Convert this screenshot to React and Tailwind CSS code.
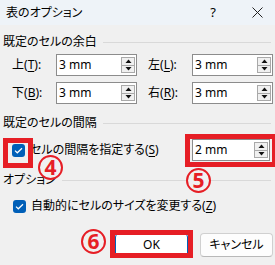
import React from 'react';

const font = "[font-family:'Noto_Sans','Noto_Sans_CJK_JP',sans-serif] [font-feature-settings:'palt']";

function Header({ children }) {
  return (
    <div className="flex items-center h-[16px] pl-[3px] pr-[4px] text-[12px] text-black">
      <span>{children}</span>
      <div className="flex-1 h-px bg-[#d9d9d9] ml-[6px]" />
    </div>
  );
}

function Spin({ value, width }) {
  return (
    <div className={`flex h-[22px] bg-white border border-[#8c8c8c] ${width}`}>
      <div className="flex-1 flex items-center pl-[2px] text-[12px] text-black">{value}</div>
      <div className="flex flex-col w-[15px] py-[2px] pr-[1px]">
        <div className="flex-1 flex items-center justify-center bg-[#f0f0f0] border border-[#a9a9a9]">
          <svg width="7" height="4" viewBox="0 0 7 4"><path d="M0.5 4 L3.5 0.5 L6.5 4 Z" fill="#111" /></svg>
        </div>
        <div className="flex-1 flex items-center justify-center bg-[#f0f0f0] border border-t-0 border-[#a9a9a9]">
          <svg width="7" height="4" viewBox="0 0 7 4"><path d="M0.5 0 L3.5 3.5 L6.5 0 Z" fill="#111" /></svg>
        </div>
      </div>
    </div>
  );
}

function Label({ text, k }) {
  return (
    <div className="w-[44px] text-[12px] text-black">
      {text}(<span className="underline underline-offset-2">{k}</span>):
    </div>
  );
}

function Check() {
  return (
    <div className="w-[13px] h-[13px] rounded-[3px] bg-[#005fb8] flex items-center justify-center shrink-0">
      <svg width="9" height="7" viewBox="0 0 9 7">
        <path d="M1 3.6 L3.3 5.8 L8 1.2" fill="none" stroke="white" strokeWidth="1.2" />
      </svg>
    </div>
  );
}

function Num({ n, className }) {
  return (
    <div className={`absolute w-[25px] h-[25px] rounded-full border-2 border-[#e61e25] bg-[#f0f0f0] flex items-center justify-center text-[#e61e25] text-[21px] font-bold leading-none ${className}`}>
      {n}
    </div>
  );
}

export default function App() {
  return (
    <div className={`relative w-[275px] h-[265px] overflow-hidden bg-[#f0f0f0] ${font}`}>
      <div className="h-[25px] bg-[#eef3f8] flex items-center pl-[6px] text-[12px] text-black">
        <span>表のオプション</span>
        <span className="ml-auto mr-[36px] text-[13px]">?</span>
        <svg width="11" height="11" viewBox="0 0 11 11" className="mr-[12px]">
          <path d="M0.5 0.5 L10.5 10.5 M10.5 0.5 L0.5 10.5" stroke="#222" strokeWidth="1" />
        </svg>
      </div>

      <div className="mt-[9px]"><Header>既定のセルの余白</Header></div>

      <div className="mt-[4px] pl-[12px] flex flex-col gap-[6px]">
        <div className="flex items-center">
          <Label text="上" k="T" />
          <Spin value="3 mm" width="w-[81px]" />
          <div className="w-[11px]" />
          <Label text="左" k="L" />
          <Spin value="3 mm" width="w-[81px]" />
        </div>
        <div className="flex items-center">
          <Label text="下" k="B" />
          <Spin value="3 mm" width="w-[81px]" />
          <div className="w-[11px]" />
          <Label text="右" k="R" />
          <Spin value="3 mm" width="w-[81px]" />
        </div>
      </div>

      <div className="mt-[11px]"><Header>既定のセルの間隔</Header></div>

      <div className="mt-[8px] h-[22px] flex items-center pl-[12px] pr-[5px]">
        <Check />
        <span className="ml-[5px] text-[12px] text-black">
          セルの間隔を指定する(<span className="underline underline-offset-2">S</span>)
        </span>
        <div className="ml-auto">
          <Spin value="2 mm" width="w-[78px]" />
        </div>
      </div>

      <div className="mt-[11px]"><Header>オプション</Header></div>

      <div className="mt-[10px] h-[16px] flex items-center pl-[13px]">
        <Check />
        <span className="ml-[5px] text-[12px] text-black">
          自動的にセルのサイズを変更する(<span className="underline underline-offset-2">Z</span>)
        </span>
      </div>

      <div className="mt-[19px] flex justify-end gap-[12px] pr-[2px]">
        <button className="w-[73px] h-[24px] rounded-[4px] bg-white border border-[#005fb8] text-[12px] text-black">OK</button>
        <button className="w-[73px] h-[24px] rounded-[4px] bg-[#fdfdfd] border border-[#d0d0d0] border-b-[#b8b8b8] text-[12px] text-black">キャンセル</button>
      </div>

      <div className="absolute left-[3px] top-[138px] w-[30px] h-[30px] border-[5px] border-[#e61e25]" />
      <div className="absolute left-[185px] top-[134px] w-[92px] h-[33px] border-[5px] border-[#e61e25]" />
      <div className="absolute left-[110px] top-[230px] w-[83px] h-[28px] border-[5px] border-[#e61e25]" />

      <Num n="4" className="left-[38px] top-[155px]" />
      <Num n="5" className="left-[186px] top-[168px]" />
      <Num n="6" className="left-[81px] top-[229px]" />
    </div>
  );
}
